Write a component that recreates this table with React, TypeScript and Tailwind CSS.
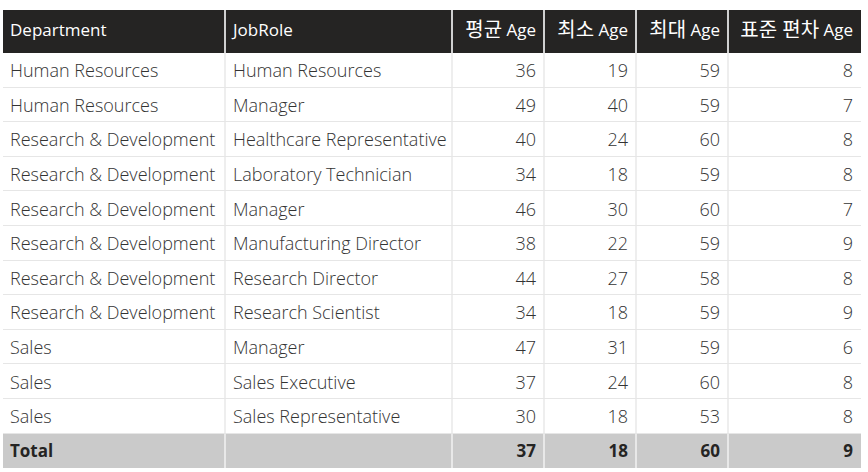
import React from "react";

type Row = {
  dept: string;
  role: string;
  avg: number;
  min: number;
  max: number;
  std: number;
};

const rows: Row[] = [
  { dept: "Human Resources", role: "Human Resources", avg: 36, min: 19, max: 59, std: 8 },
  { dept: "Human Resources", role: "Manager", avg: 49, min: 40, max: 59, std: 7 },
  { dept: "Research & Development", role: "Healthcare Representative", avg: 40, min: 24, max: 60, std: 8 },
  { dept: "Research & Development", role: "Laboratory Technician", avg: 34, min: 18, max: 59, std: 8 },
  { dept: "Research & Development", role: "Manager", avg: 46, min: 30, max: 60, std: 7 },
  { dept: "Research & Development", role: "Manufacturing Director", avg: 38, min: 22, max: 59, std: 9 },
  { dept: "Research & Development", role: "Research Director", avg: 44, min: 27, max: 58, std: 8 },
  { dept: "Research & Development", role: "Research Scientist", avg: 34, min: 18, max: 59, std: 9 },
  { dept: "Sales", role: "Manager", avg: 47, min: 31, max: 59, std: 6 },
  { dept: "Sales", role: "Sales Executive", avg: 37, min: 24, max: 60, std: 8 },
  { dept: "Sales", role: "Sales Representative", avg: 30, min: 18, max: 53, std: 8 },
];

const cols = "grid grid-cols-[223px_227px_92px_92px_92px_132px]";
const font = "font-['Segoe_UI','Open_Sans','Noto_Sans_CJK_KR',sans-serif]";

const head = "flex items-center pb-[3px] whitespace-nowrap";
const cell = "flex items-center pt-[2px] whitespace-nowrap";

export default function App() {
  return (
    <div className={`w-[868px] h-[472px] bg-white pt-[10px] pl-[3px] ${font}`}>
      <div className="w-[858px]">
        {/* header */}
        <div className={`${cols} h-[43px] bg-[#252423] text-white text-[17px]`}>
          <div className={`${head} pl-[7px] border-r-2 border-[#d0d0d0]`}>Department</div>
          <div className={`${head} pl-[7px] border-r-2 border-[#d0d0d0]`}>JobRole</div>
          <div className={`${head} justify-end pr-[7px] border-r-2 border-[#d0d0d0]`}>
            <span className="text-[20px]">평균</span>&nbsp;Age
          </div>
          <div className={`${head} justify-end pr-[7px] border-r-2 border-[#d0d0d0]`}>
            <span className="text-[20px]">최소</span>&nbsp;Age
          </div>
          <div className={`${head} justify-end pr-[7px] border-r-2 border-[#d0d0d0]`}>
            <span className="text-[20px]">최대</span>&nbsp;Age
          </div>
          <div className={`${head} justify-end pr-[8px]`}>
            <span className="text-[20px]">표준 편차</span>&nbsp;Age
          </div>
        </div>

        {rows.map((r, i) => (
          <div
            key={i}
            className={`${cols} h-[34.6px] text-[18px] font-light text-[#333333] border-b border-[#e6e6e6]`}
          >
            <div className={`${cell} pl-[7px] border-r-2 border-[#eeeeee]`}>{r.dept}</div>
            <div className={`${cell} pl-[7px] border-r-2 border-[#eeeeee]`}>{r.role}</div>
            <div className={`${cell} justify-end pr-[7px] border-r-2 border-[#eeeeee]`}>{r.avg}</div>
            <div className={`${cell} justify-end pr-[7px] border-r-2 border-[#eeeeee]`}>{r.min}</div>
            <div className={`${cell} justify-end pr-[7px] border-r-2 border-[#eeeeee]`}>{r.max}</div>
            <div className={`${cell} justify-end pr-[8px]`}>{r.std}</div>
          </div>
        ))}

        {/* total */}
        <div className={`${cols} h-[34px] bg-[#cacaca] text-[17px] font-bold text-[#252423]`}>
          <div className="flex items-center pl-[7px] border-r-2 border-[#e8e8e8]">Total</div>
          <div className="flex items-center border-r-2 border-[#e8e8e8]"></div>
          <div className="flex items-center justify-end pr-[7px] border-r-2 border-[#e8e8e8]">37</div>
          <div className="flex items-center justify-end pr-[7px] border-r-2 border-[#e8e8e8]">18</div>
          <div className="flex items-center justify-end pr-[7px] border-r-2 border-[#e8e8e8]">60</div>
          <div className="flex items-center justify-end pr-[8px]">9</div>
        </div>
      </div>
    </div>
  );
}
